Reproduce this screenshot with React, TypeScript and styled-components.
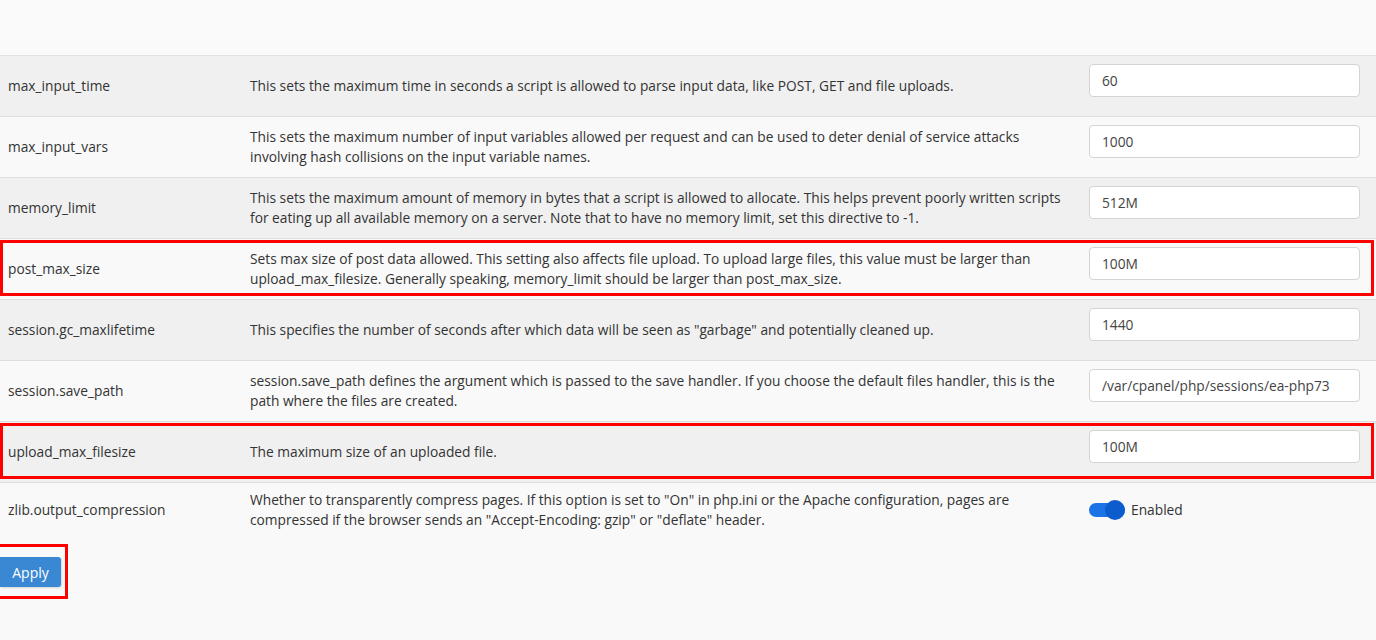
import React from "react";
import styled, { createGlobalStyle } from "styled-components";

const Global = createGlobalStyle`
  html, body { margin: 0; padding: 0; background: #f9f9f9; }
  body { font-family: "Open Sans", "Liberation Sans", sans-serif; font-size: 13.75px; color: #333; }
  * { box-sizing: border-box; }
`;

const Page = styled.div`
  width: 1376px;
  height: 640px;
  overflow: hidden;
  background: #f9f9f9;
`;

const TopSpace = styled.div`
  height: 56px;
  background: #fafafa;
  border-bottom: 1px solid #e2e2e2;
`;

const Table = styled.div`
  display: flex;
  flex-direction: column;
`;

const Row = styled.div<{ $striped: boolean; $height: number }>`
  position: relative;
  display: grid;
  grid-template-columns: 242px 839px 271px;
  align-items: center;
  height: ${(p) => p.$height}px;
  padding-left: 8px;
  background: ${(p) => (p.$striped ? "#f0f0f0" : "#f9f9f9")};
  border-bottom: 1px solid #dedede;
  &:last-child { border-bottom: none; }
`;

const Name = styled.div`
  line-height: 20px;
`;

const Desc = styled.div`
  line-height: 20px;
  white-space: nowrap;
`;

const Input = styled.input`
  align-self: start;
  margin-top: 8px;
  width: 271px;
  height: 33px;
  border: 1px solid #d4d4d4;
  border-radius: 4px;
  background: #fff;
  padding: 0 12px;
  font-family: "Open Sans", "Liberation Sans", sans-serif;
  font-size: 13.75px;
  color: #444;
  outline: none;
`;

const Highlight = styled.div`
  position: absolute;
  left: 0;
  right: 2px;
  top: 1px;
  bottom: 3px;
  border: 3px solid #f00;
  pointer-events: none;
`;

const ToggleWrap = styled.div`
  display: flex;
  align-items: center;
  gap: 6px;
`;

const Track = styled.div`
  position: relative;
  width: 36px;
  height: 14px;
  border-radius: 7px;
  background: #1a74e6;
`;

const Knob = styled.div`
  position: absolute;
  right: 0;
  top: -3px;
  width: 20px;
  height: 20px;
  border-radius: 50%;
  background: #0c5ccd;
`;

const Footer = styled.div`
  padding-top: 8px;
`;

const ApplyFrame = styled.div`
  display: inline-flex;
  width: 68px;
  height: 55px;
  border: 3px solid #f00;
  border-left: none;
  align-items: center;
`;

const ApplyButton = styled.button`
  width: 61px;
  height: 30px;
  margin-top: 1px;
  border: none;
  border-radius: 0 3px 3px 0;
  background: #3a88d3;
  box-shadow: 1px 1px 2px rgba(0, 0, 0, 0.15);
  color: #fff;
  font-family: "Open Sans", "Liberation Sans", sans-serif;
  font-size: 14px;
  padding: 0;
  cursor: pointer;
`;

type Item = {
  name: string;
  desc: React.ReactNode;
  value?: string;
  toggle?: boolean;
  highlight?: boolean;
  height?: number;
};

const items: Item[] = [
  {
    name: "max_input_time",
    desc: "This sets the maximum time in seconds a script is allowed to parse input data, like POST, GET and file uploads.",
    value: "60",
  },
  {
    name: "max_input_vars",
    desc: (
      <>
        This sets the maximum number of input variables allowed per request and can be used to deter denial of service attacks
        <br />
        involving hash collisions on the input variable names.
      </>
    ),
    value: "1000",
  },
  {
    name: "memory_limit",
    desc: (
      <>
        This sets the maximum amount of memory in bytes that a script is allowed to allocate. This helps prevent poorly written scripts
        <br />
        for eating up all available memory on a server. Note that to have no memory limit, set this directive to -1.
      </>
    ),
    value: "512M",
  },
  {
    name: "post_max_size",
    desc: (
      <>
        Sets max size of post data allowed. This setting also affects file upload. To upload large files, this value must be larger than
        <br />
        upload_max_filesize. Generally speaking, memory_limit should be larger than post_max_size.
      </>
    ),
    value: "100M",
    highlight: true,
  },
  {
    name: "session.gc_maxlifetime",
    desc: 'This specifies the number of seconds after which data will be seen as "garbage" and potentially cleaned up.',
    value: "1440",
  },
  {
    name: "session.save_path",
    desc: (
      <>
        session.save_path defines the argument which is passed to the save handler. If you choose the default files handler, this is the
        <br />
        path where the files are created.
      </>
    ),
    value: "/var/cpanel/php/sessions/ea-php73",
  },
  {
    name: "upload_max_filesize",
    desc: "The maximum size of an uploaded file.",
    value: "100M",
    highlight: true,
  },
  {
    name: "zlib.output_compression",
    desc: (
      <>
        Whether to transparently compress pages. If this option is set to "On" in php.ini or the Apache configuration, pages are
        <br />
        compressed if the browser sends an "Accept-Encoding: gzip" or "deflate" header.
      </>
    ),
    toggle: true,
    height: 53,
  },
];

export default function App() {
  return (
    <Page>
      <Global />
      <TopSpace />
      <Table>
        {items.map((it, i) => (
          <Row key={it.name} $striped={i % 2 === 0} $height={it.height ?? 61}>
            <Name>{it.name}</Name>
            <Desc>{it.desc}</Desc>
            {it.toggle ? (
              <ToggleWrap>
                <Track>
                  <Knob />
                </Track>
                <span>Enabled</span>
              </ToggleWrap>
            ) : (
              <Input defaultValue={it.value} readOnly />
            )}
            {it.highlight && <Highlight />}
          </Row>
        ))}
      </Table>
      <Footer>
        <ApplyFrame>
          <ApplyButton>Apply</ApplyButton>
        </ApplyFrame>
      </Footer>
    </Page>
  );
}
